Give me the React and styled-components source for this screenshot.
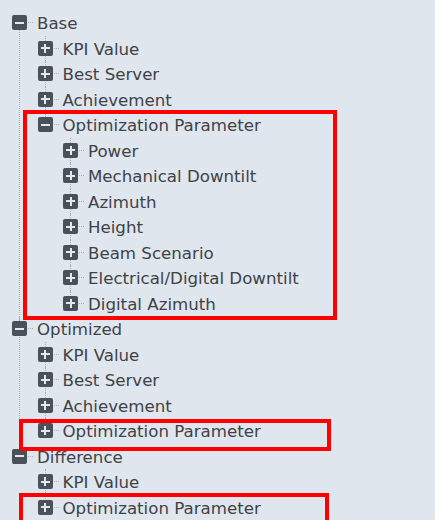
import React from "react";
import styled, { createGlobalStyle } from "styled-components";

const GlobalStyle = createGlobalStyle`
  html, body {
    margin: 0;
    padding: 0;
    background: #dfe6ee;
  }
`;

const tree = [
  {
    label: "Base",
    open: true,
    children: [
      { label: "KPI Value" },
      { label: "Best Server" },
      { label: "Achievement" },
      {
        label: "Optimization Parameter",
        open: true,
        mark: { top: -2, left: -15, width: 314, height: 210 },
        children: [
          { label: "Power" },
          { label: "Mechanical Downtilt" },
          { label: "Azimuth" },
          { label: "Height" },
          { label: "Beam Scenario" },
          { label: "Electrical/Digital Downtilt" },
          { label: "Digital Azimuth" },
        ],
      },
    ],
  },
  {
    label: "Optimized",
    open: true,
    children: [
      { label: "KPI Value" },
      { label: "Best Server" },
      { label: "Achievement" },
      {
        label: "Optimization Parameter",
        mark: { top: 1, left: -19, width: 312, height: 32 },
      },
    ],
  },
  {
    label: "Difference",
    open: true,
    children: [
      { label: "KPI Value" },
      {
        label: "Optimization Parameter",
        mark: { top: -2, left: -19, width: 310, height: 40 },
      },
    ],
  },
];

const ROW = 25.5;

const Page = styled.div`
  height: 520px;
  overflow: hidden;
  padding: 10px 0 0 12px;
  box-sizing: border-box;
  font-family: "DejaVu Sans", Verdana, sans-serif;
  font-size: 16.65px;
  color: #3f4246;
`;

const Node = styled.div`
  position: relative;

  /* dotted line joining siblings through the toggle centres */
  &::before {
    content: "";
    position: absolute;
    left: 7px;
    top: ${(p) => (p.$first ? `${ROW / 2}px` : "0")};
    height: ${(p) => (p.$last ? `${ROW / 2}px` : "100%")};
    border-left: 1px dotted #a9b0b9;
  }
`;

const Mark = styled.div`
  position: absolute;
  top: ${(p) => p.$top}px;
  left: ${(p) => p.$left}px;
  width: ${(p) => p.$width}px;
  height: ${(p) => p.$height}px;
  border: 4px solid #ff0000;
  box-sizing: border-box;
  pointer-events: none;
  z-index: 2;
`;

const Row = styled.div`
  display: flex;
  align-items: center;
  height: ${ROW}px;
  white-space: nowrap;
`;

const Toggle = styled.span`
  flex: none;
  width: 15px;
  height: 15px;
  border-radius: 2px;
  background: #4a515b;
  position: relative;
  z-index: 1;

  &::before,
  &::after {
    content: "";
    position: absolute;
    background: #e4e8ee;
    left: 3px;
    top: 6.5px;
    width: 9px;
    height: 2px;
  }

  &::after {
    display: ${(p) => (p.$open ? "none" : "block")};
    left: 6.5px;
    top: 3px;
    width: 2px;
    height: 9px;
  }
`;

const Dash = styled.span`
  flex: none;
  width: 5px;
  margin: 0 4px 0 1px;
  border-top: 1px dotted #a9b0b9;
`;

const Label = styled.span`
  line-height: 1;
  padding-top: 4px;
`;

const Children = styled.div`
  padding-left: 25.5px;
`;

const TreeNode = ({ node, first, last }) => {
  const { label, open, children, mark } = node;
  return (
    <Node $first={first} $last={last}>
      {mark && (
        <Mark $top={mark.top} $left={mark.left} $width={mark.width} $height={mark.height} />
      )}
      <Row>
        <Toggle $open={open} />
        <Dash />
        <Label>{label}</Label>
      </Row>
      {open && children && (
        <Children>
          {children.map((c, i) => (
            <TreeNode key={i} node={c} last={i === children.length - 1} />
          ))}
        </Children>
      )}
    </Node>
  );
};

const App = () => {
  return (
    <>
      <GlobalStyle />
      <Page>
        {tree.map((n, i) => (
          <TreeNode key={i} node={n} first={i === 0} last={i === tree.length - 1} />
        ))}
      </Page>
    </>
  );
};

export default App;
